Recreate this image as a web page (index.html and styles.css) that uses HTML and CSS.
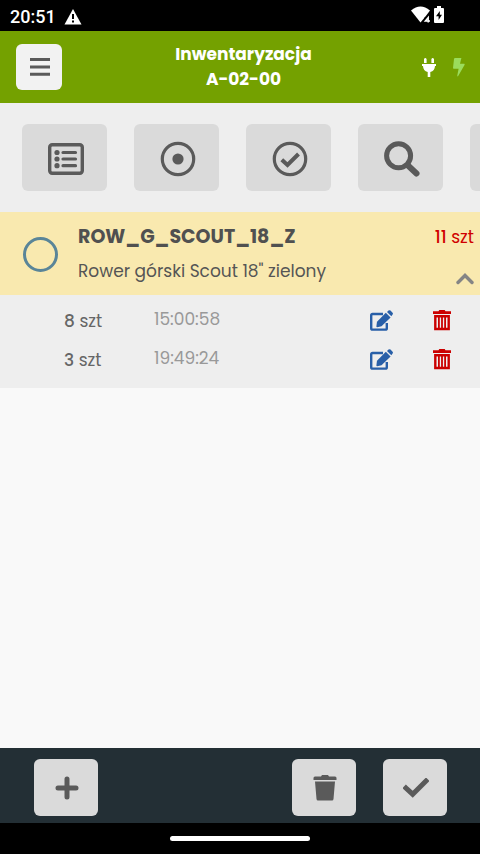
FILE: index.html
```html
<!DOCTYPE html>
<html lang="pl">
<head>
<meta charset="utf-8">
<meta name="viewport" content="width=device-width, initial-scale=1">
<title>Inwentaryzacja A-02-00</title>
<link rel="stylesheet" href="styles.css">
</head>
<body>
<svg class="defs" aria-hidden="true">
  <symbol id="edit" viewBox="0 0 24 21">
    <path d="M13 4H2.600Q1.200 4 1.200 5.400V18.200Q1.200 19.600 2.600 19.600H15.400Q16.800 19.600 16.800 18.200V13" fill="none" stroke="currentColor" stroke-width="2.400"/>
    <path d="M15.800 2.800 20.600 7.400 11.500 16.300 7.300 17.200Q6.300 17.200 6.400 16.200L7 11.800Z" fill="currentColor"/>
    <path d="M17 2 18.500 .6Q19.500 -.2 20.500 .6L22.600 2.700Q23.300 3.700 22.600 4.600L21.300 6.200Z" fill="currentColor"/>
  </symbol>
  <symbol id="bin" viewBox="0 0 18 21">
    <path d="M5.500 1.200 6.300 0H11.700L12.500 1.200H18V4H0V1.200Z" fill="currentColor"/>
    <path d="M2.300 6.200H15.700V19H2.300Z" fill="none" stroke="currentColor" stroke-width="2.400"/>
    <path d="M5.900 6V19M9 6V19M12.100 6V19" stroke="currentColor" stroke-width="1.800"/>
  </symbol>
</svg>
<div class="screen">
  <div class="status">
    <span class="clock">20:51</span>
    <svg width="18" height="16" viewBox="0 0 18 16"><path d="M9 0 17.500 15.500H.5Z" fill="#fff"/><path d="M9 5V10M9 11.500V13.500" stroke="#000" stroke-width="2"/></svg>
    <span class="status-right">
      <svg width="20" height="18" viewBox="0 0 20 18"><path d="M0 4.500Q9.500-3.500 19 4.500L14.500 10.500 9.500 16.500Z" fill="#fff"/><path d="M13 17V12L17 9H20V17Z" fill="#000"/><path d="M17.200 16.500V11.500L14.300 15H19" fill="none" stroke="#fff" stroke-width="1.500"/></svg>
      <svg width="10" height="18" viewBox="0 0 10 18"><path d="M3 0H7V2H9Q10 2 10 3V16Q10 17 9 17H1Q0 17 0 16V3Q0 2 1 2H3Z" fill="#fff"/><path d="M5.800 5 2 10.300H4.600V14L8 8.700H5.800Z" fill="#000"/></svg>
    </span>
  </div>
  <header class="header">
    <button class="menu" aria-label="Menu"><svg width="20" height="18" viewBox="0 0 20 18"><path d="M1.500 1.600H18.500M1.500 9H18.500M1.500 16.200H18.500" stroke="currentColor" stroke-width="3" stroke-linecap="square"/></svg></button>
    <h1 class="title">Inwentaryzacja<br>A-02-00</h1>
    <div class="indicators">
      <svg width="14" height="19" viewBox="0 0 14 19"><path d="M2 1Q3.300-.8 4.600 1V5H2ZM9.400 1Q10.700-.8 12 1V5H9.400ZM0 6H14V8H13Q12.800 13 8.300 14V19H5.700V14Q1.200 13 1 8H0Z" fill="#fff"/></svg>
      <svg width="12" height="19" viewBox="0 0 12 19"><path d="M2 0H8.400L7 5.800H11.300Q12 6 11.500 7L5.200 18Q4.300 19 4.300 17.500L5.600 10.800H.8Q0 10.600 0 10L1 1Q1.200 0 2 0Z" fill="#9bdc5c"/></svg>
    </div>
  </header>
  <nav class="toolbar">
    <button class="tool" aria-label="Lista"><svg width="36" height="32" viewBox="0 0 36 32"><rect x="1.700" y="1.700" width="32.600" height="28.600" rx="2.500" fill="none" stroke="currentColor" stroke-width="3.400"/><g fill="currentColor"><circle cx="9" cy="9.500" r="2.600"/><circle cx="9" cy="16" r="2.600"/><circle cx="9" cy="22.700" r="2.600"/></g><path d="M15 9.500H27.500M15 16H27.500M15 22.700H27.500" stroke="currentColor" stroke-width="3.200" stroke-linecap="round"/></svg></button>
    <button class="tool" aria-label="Punkt"><svg width="36" height="36" viewBox="0 0 36 36"><circle cx="18" cy="18" r="15.700" fill="none" stroke="currentColor" stroke-width="3.200"/><circle cx="18" cy="18" r="5.600" fill="currentColor"/></svg></button>
    <button class="tool" aria-label="Zatwierdzone"><svg width="36" height="36" viewBox="0 0 36 36"><circle cx="18" cy="18" r="15.700" fill="none" stroke="currentColor" stroke-width="3.200"/><path d="M9.800 18.700 15.500 24 26.500 13" fill="none" stroke="currentColor" stroke-width="4"/></svg></button>
    <button class="tool" aria-label="Szukaj"><svg width="36" height="36" viewBox="0 0 36 36"><circle cx="14.600" cy="14.800" r="12" fill="none" stroke="currentColor" stroke-width="5"/><path d="M24 24.500 32.500 32.500" stroke="currentColor" stroke-width="6" stroke-linecap="round"/></svg></button>
    <button class="tool" aria-label="Więcej"></button>
  </nav>
  <main class="content">
    <section class="item">
      <input class="pick" type="radio" aria-label="ROW_G_SCOUT_18_Z">
      <div class="item-text">
        <h2 class="code">ROW_G_SCOUT_18_Z</h2>
        <p class="name">Rower górski Scout 18" zielony</p>
      </div>
      <div class="item-side">
        <span class="total"><b>11</b> szt</span>
        <button class="plain collapse" aria-label="Zwiń"><svg width="18" height="12" viewBox="0 0 18 12"><path d="M2 9.500 9 2.500 16 9.500" fill="none" stroke="currentColor" stroke-width="3.400" stroke-linecap="round"/></svg></button>
      </div>
    </section>
    <ul class="entries">
      <li class="entry">
        <span class="qty"><b>8</b> szt</span>
        <time class="time">15:00:58</time>
        <button class="plain edit" aria-label="Edytuj"><svg width="24" height="21"><use href="#edit"/></svg></button>
        <button class="plain delete" aria-label="Usuń"><svg width="18" height="21"><use href="#bin"/></svg></button>
      </li>
      <li class="entry">
        <span class="qty"><b>3</b> szt</span>
        <time class="time">19:49:24</time>
        <button class="plain edit" aria-label="Edytuj"><svg width="24" height="21"><use href="#edit"/></svg></button>
        <button class="plain delete" aria-label="Usuń"><svg width="18" height="21"><use href="#bin"/></svg></button>
      </li>
    </ul>
  </main>
  <footer class="footer">
    <button class="action" aria-label="Dodaj"><svg width="24" height="24" viewBox="0 0 24 24"><path d="M12 3V21M3 12H21" stroke="currentColor" stroke-width="5" stroke-linecap="round"/></svg></button>
    <div class="footer-right">
      <button class="action" aria-label="Usuń"><svg width="24" height="26" viewBox="0 0 24 26"><path d="M8 1.500 9 0H15L16 1.500H22Q23.500 1.500 23.500 3V5H.5V3Q.5 1.500 2 1.500ZM2 6.500H22L20.500 24Q20.300 25.500 19 25.500H5Q3.700 25.500 3.500 24Z" fill="currentColor"/></svg></button>
      <button class="action" aria-label="Zatwierdź"><svg width="26" height="20" viewBox="0 0 26 20"><path d="M3 10 9.700 16.200 23 3" fill="none" stroke="currentColor" stroke-width="5" stroke-linecap="square"/></svg></button>
    </div>
  </footer>
  <div class="home"><span class="home-bar"></span></div>
</div>
</body>
</html>
```
FILE: styles.css
```css
* {
  box-sizing: border-box;
}

body {
  margin: 0;
  font-family: Poppins, Inter, "Liberation Sans", sans-serif;
  font-size: 17px;
  line-height: 24px;
  color: #555;
}

h1,
h2,
p,
ul {
  margin: 0;
  padding: 0;
}

svg {
  display: block;
  flex: none;
}

button {
  display: flex;
  align-items: center;
  justify-content: center;
  margin: 0;
  padding: 0;
  border: 0;
  color: #5a5a5a;
}

.defs {
  position: absolute;
  width: 0;
  height: 0;
}

.screen {
  display: flex;
  flex-direction: column;
  min-height: 100vh;
  background: #f9f9f9;
}

.status {
  display: flex;
  align-items: center;
  gap: 8px;
  padding: 2px 36px 0 10px;
  height: 31px;
  background: #000;
  color: #fff;
}

.clock {
  font-family: Roboto, sans-serif;
  font-size: 18px;
  font-weight: 500;
}

.status-right {
  display: flex;
  gap: 3px;
  margin-left: auto;
  padding-bottom: 4px;
}

.header {
  display: grid;
  grid-template-columns: 1fr auto 1fr;
  align-items: center;
  padding: 0 15px 0 16px;
  height: 72px;
  background: #74a100;
}

.menu {
  width: 46px;
  height: 46px;
  padding-left: 2px;
  border-radius: 6px;
  background: #f2f2f2;
}

.title {
  margin-left: 6px;
  font-size: 17px;
  line-height: 25px;
  font-weight: 700;
  text-align: center;
  color: #fff;
}

.indicators {
  display: flex;
  justify-content: flex-end;
  gap: 17px;
}

.toolbar {
  display: flex;
  gap: 27px;
  padding: 21px 22px;
  overflow: hidden;
  background: #eee;
}

.tool {
  flex: none;
  width: 85px;
  height: 67px;
  padding: 2px 0 0 2px;
  border-radius: 6px;
  background: #dadada;
}

.content {
  flex: 1;
}

.item {
  display: flex;
  align-items: center;
  gap: 20px;
  height: 83px;
  padding: 0 6px 0 23px;
  background: #f9e9af;
}

.pick {
  appearance: none;
  flex: none;
  width: 35px;
  height: 35px;
  margin: 2px 0 0;
  border: 3px solid #5a8598;
  border-radius: 50%;
}

.item-text {
  flex: 1;
  display: grid;
  gap: 10px;
}

.code {
  font-size: 19px;
  line-height: 24px;
  font-weight: 700;
  color: #505050;
}

.item-side {
  display: flex;
  flex-direction: column;
  align-items: flex-end;
  align-self: stretch;
  justify-content: space-between;
  padding: 13px 0 10px;
}

.total {
  color: #d00000;
}

.plain {
  background: none;
}

.collapse {
  color: #858585;
}

.entries {
  display: grid;
  gap: 15px;
  padding: 14px 29px 16px 64px;
  background: #eee;
  list-style: none;
}

.entry {
  display: grid;
  grid-template-columns: 90px 1fr auto auto;
  align-items: center;
}

.qty {
  color: #666;
}

.qty b,
.total b {
  font-weight: 500;
}

.time {
  padding-bottom: 4px;
  line-height: 20px;
  color: #999;
}

.edit,
.delete {
  padding-bottom: 2px;
}

.edit {
  margin-right: 39px;
  color: #285fa8;
}

.delete {
  color: #cb0000;
}

.footer {
  display: flex;
  align-items: center;
  justify-content: space-between;
  height: 75px;
  padding: 4px 33px 0 34px;
  background: #232f35;
}

.footer-right {
  display: flex;
  gap: 27px;
}

.action {
  width: 64px;
  height: 57px;
  padding: 1px 0 0 2px;
  border-radius: 6px;
  background: #dadada;
}

.home {
  display: flex;
  align-items: center;
  justify-content: center;
  height: 31px;
  background: #000;
}

.home-bar {
  width: 29%;
  height: 5px;
  border-radius: 3px;
  background: #fff;
}
```
